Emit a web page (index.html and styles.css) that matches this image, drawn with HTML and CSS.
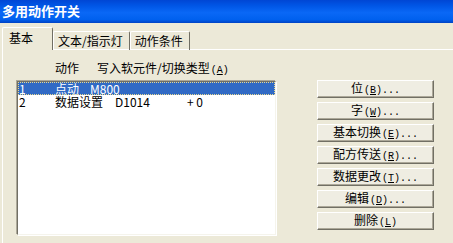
FILE: index.html
```html
<!DOCTYPE html>
<html lang="zh-CN">

<head>
    <meta charset="UTF-8">
    <title>多用动作开关</title>
    <link rel="stylesheet" href="styles.css">
</head>

<body>
    <div class="titlebar">多用动作开关</div>

    <div class="tabs">
        <div class="tab active">基本</div>
        <div class="tab">文本/指示灯</div>
        <div class="tab">动作条件</div>
    </div>

    <div class="panel">
        <div class="left">
            <div class="head">
                <span class="c-act">动作</span>
                <span>写入软元件/切换类型<span class="key">(<u>A</u>)</span></span>
            </div>
            <div class="list">
                <div class="row sel">
                    <span class="c-no">1</span>
                    <span class="c-act">点动</span>
                    <span class="c-dev">M800</span>
                </div>
                <div class="row">
                    <span class="c-no">2</span>
                    <span class="c-act">数据设置</span>
                    <span class="c-dev">D1014</span>
                    <span>+ 0</span>
                </div>
            </div>
        </div>

        <div class="buttons">
            <button class="btn">位<span class="key">(<u>B</u>)...</span></button>
            <button class="btn">字<span class="key">(<u>W</u>)...</span></button>
            <button class="btn">基本切换<span class="key">(<u>E</u>)...</span></button>
            <button class="btn">配方传送<span class="key">(<u>R</u>)...</span></button>
            <button class="btn">数据更改<span class="key">(<u>T</u>)...</span></button>
            <button class="btn">编辑<span class="key">(<u>D</u>)...</span></button>
            <button class="btn">删除<span class="key">(<u>L</u>)</span></button>
        </div>
    </div>
</body>

</html>
```

FILE: styles.css
```css
* {
    margin: 0;
    padding: 0;
    box-sizing: border-box;
}

body {
    width: 453px;
    height: 243px;
    overflow: hidden;
    background-color: #ece9d8;
    font-family: "Noto Sans CJK SC", "DejaVu Sans", sans-serif;
    font-size: 12px;
    line-height: 12px;
    color: #000;
}

.titlebar {
    height: 23px;
    padding: 4px 0 0 2px;
    color: #fff;
    font-size: 13px;
    font-weight: bold;
    line-height: 14px;
    background: linear-gradient(#0046d4, #0056e6 25%, #0a68f6 55%, #0060ee 85%, #0042c4);
}

.tabs {
    display: flex;
    align-items: flex-end;
    height: 26px;
    padding-left: 2px;
}

.tab {
    height: 19px;
    padding: 3px 6px 0 4px;
    border-top: 1px solid #fff;
    border-left: 1px solid #fff;
    border-right: 1px solid #716f64;
    border-radius: 2px 2px 0 0;
    margin-bottom: -1px;
    white-space: nowrap;
}

.tab.active {
    width: 51px;
    height: 23px;
    padding: 4px 0 0 6px;
    position: relative;
    z-index: 1;
    background-color: #ece9d8;
}

.panel {
    display: flex;
    height: 200px;
    margin-left: 2px;
    border-top: 1px solid #fff;
    border-left: 1px solid #fff;
}

.left {
    padding: 12px 0 0 14px;
}

.head {
    display: flex;
    height: 19px;
    white-space: nowrap;
}

.head .c-act {
    width: 42px;
    margin-left: 38px;
}

/* 快捷键部分：半角字符 */
.key {
    margin-left: 1px;
    font-family: "Liberation Mono", monospace;
    font-size: 10px;
}

.list {
    width: 259px;
    height: 154px;
    background-color: #fff;
    border-top: 1px solid #716f64;
    border-left: 1px solid #716f64;
    border-right: 1px solid #f5f4ec;
    border-bottom: 1px solid #f5f4ec;
    box-shadow: -1px -1px 0 #aca899, 1px 1px 0 #fff;
}

.row {
    display: flex;
    height: 13px;
    white-space: nowrap;
    line-height: 13px;
}

.row.sel {
    color: #fff;
    background-color: #316ac5;
    outline: 1px dotted #e8d890;
    outline-offset: -1px;
}

.c-no {
    width: 37px;
    padding-left: 1px;
}

.row .c-act {
    width: 60px;
}

.row.sel .c-act {
    width: 35px;
}

.c-dev {
    width: 72px;
}

.buttons {
    display: flex;
    flex-direction: column;
    gap: 4px;
    margin: 30px 0 0 41px;
}

.btn {
    width: 117px;
    height: 18px;
    font-family: inherit;
    font-size: 12px;
    line-height: 12px;
    color: #000;
    background-color: #efede2;
    border-top: 1px solid #fff;
    border-left: 1px solid #fff;
    border-right: 1px solid #716f64;
    border-bottom: 1px solid #716f64;
    box-shadow: inset -1px -1px 0 #aca899;
}
```
